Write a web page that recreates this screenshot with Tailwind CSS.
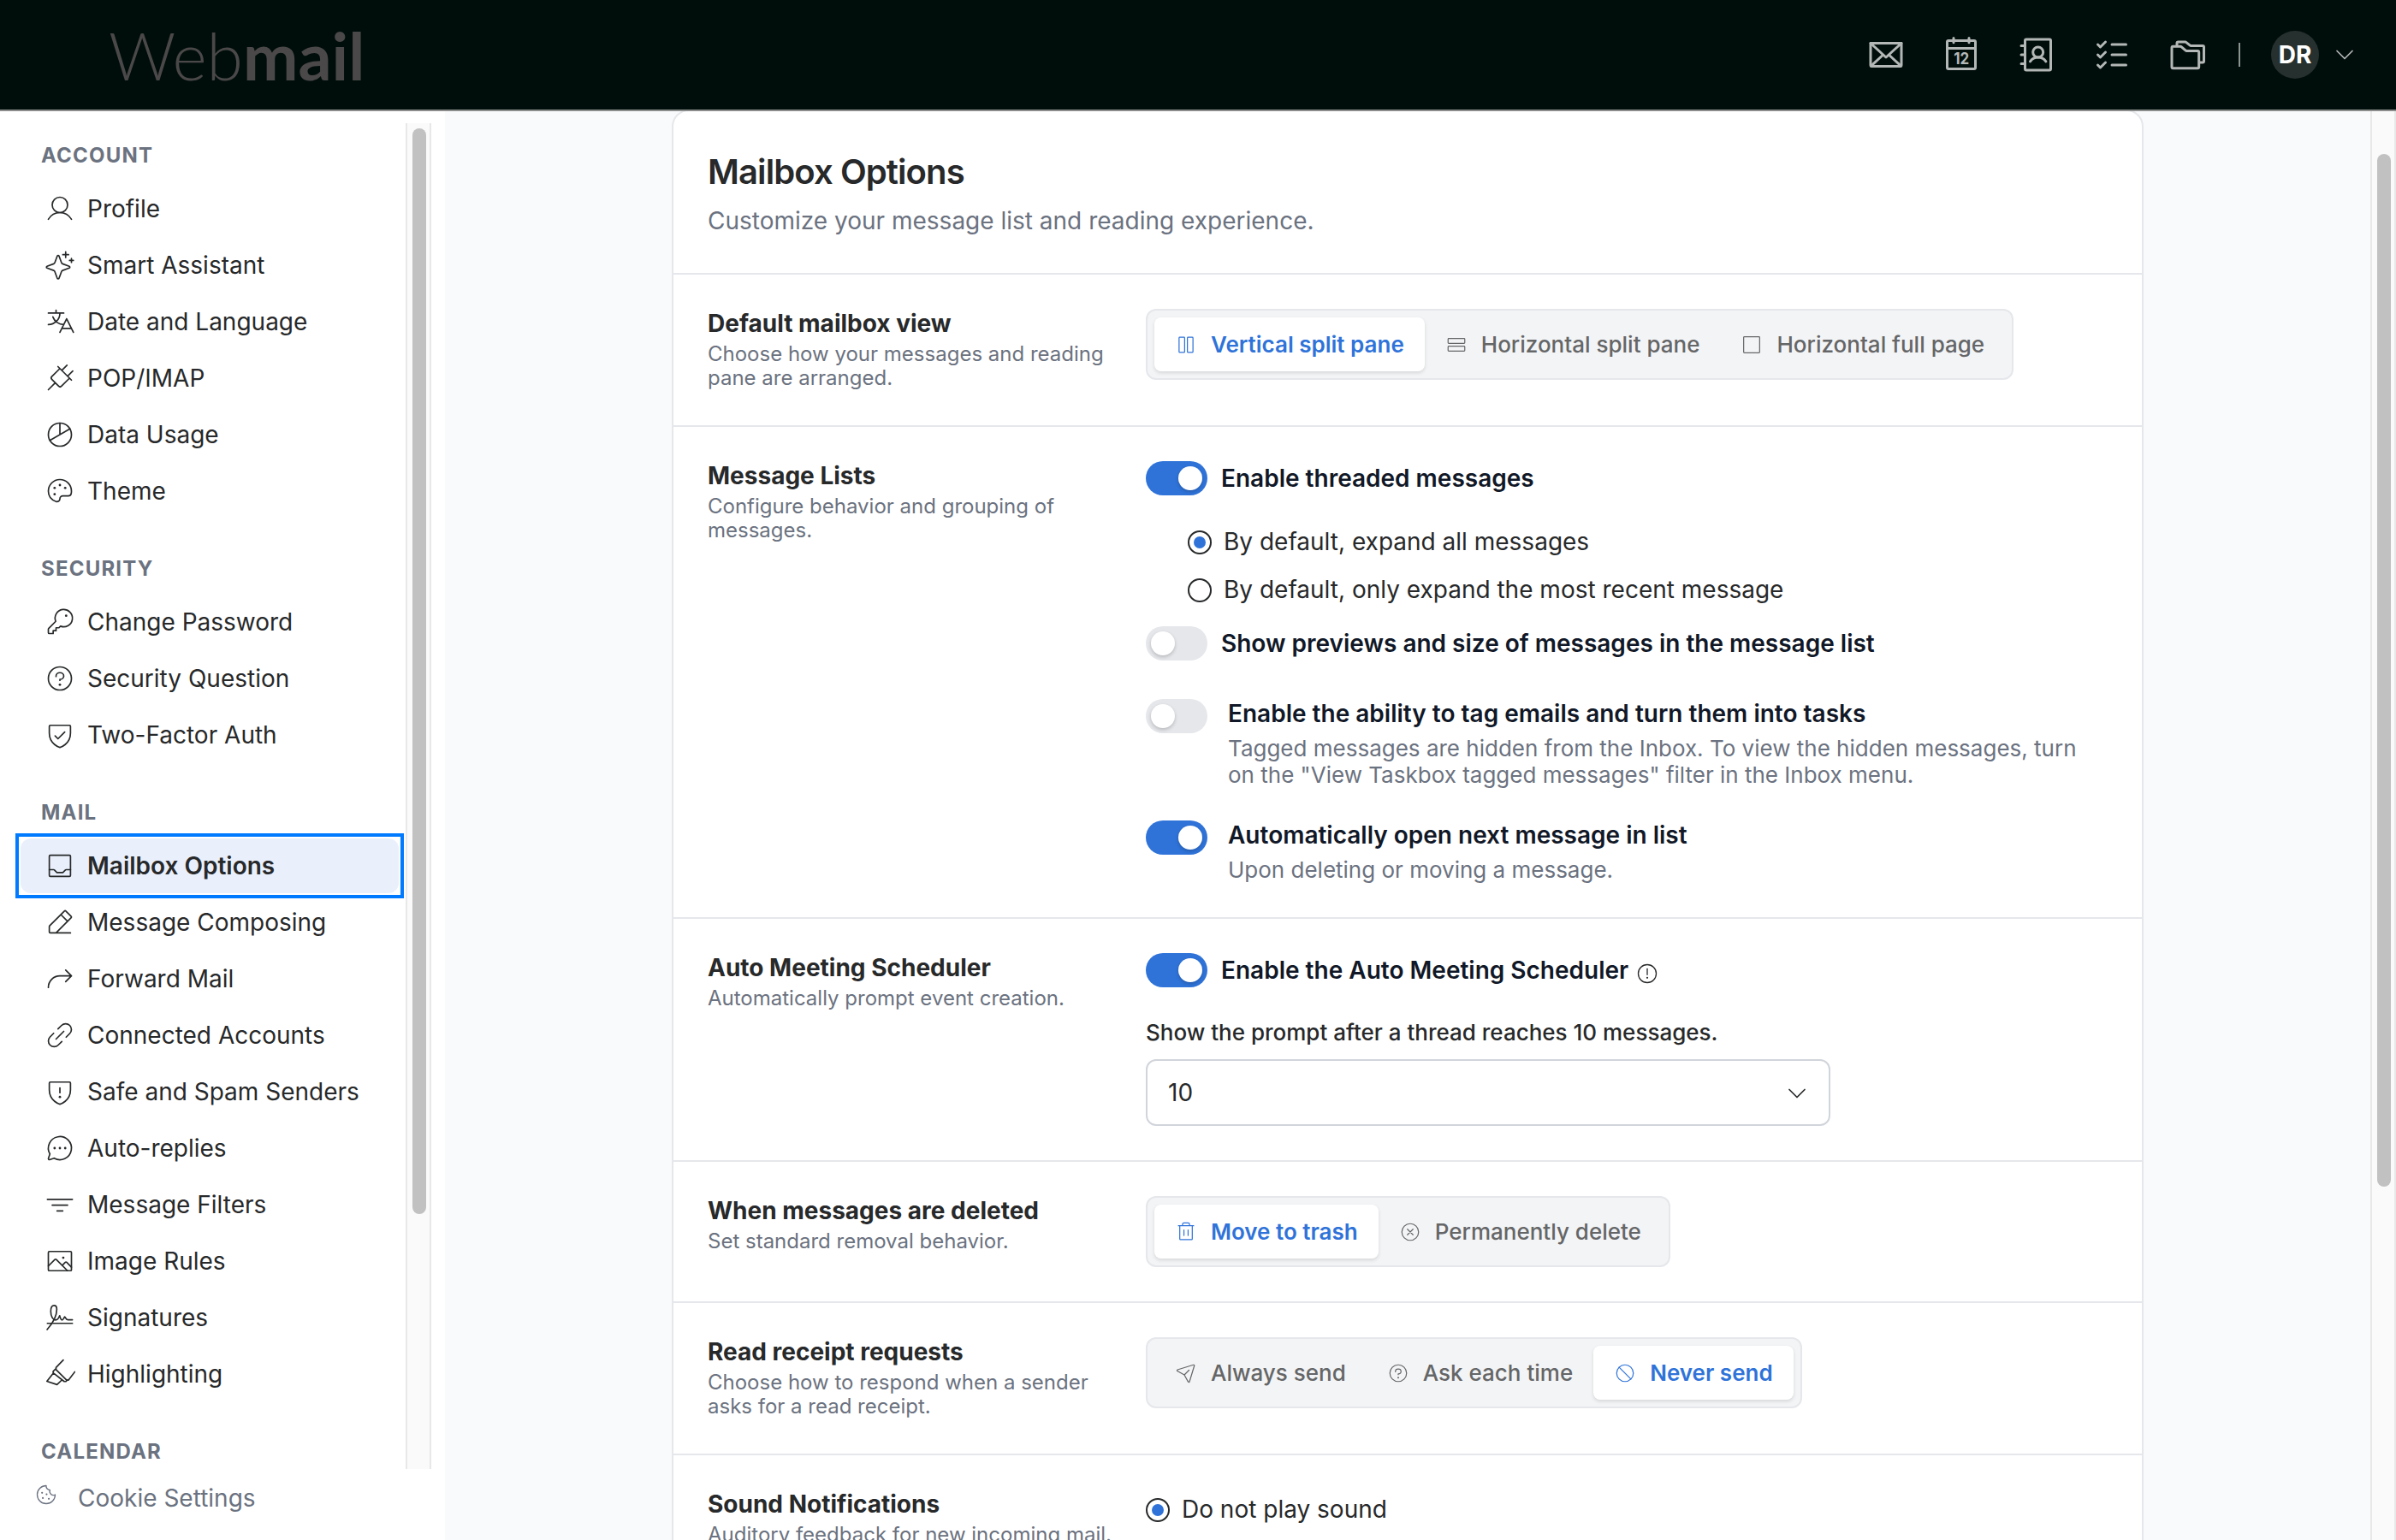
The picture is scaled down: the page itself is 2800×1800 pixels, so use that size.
<!DOCTYPE html>
<html lang="en" class="text-[32px]">
<head>
  <meta charset="UTF-8" />
  <title>Webmail - Mailbox Options</title>
  <script src="https://cdn.jsdelivr.net/npm/@tailwindcss/browser@4"></script>
</head>
<body class="h-[1800px] w-[2800px] flex flex-col overflow-hidden bg-[#f9fafc] font-['Inter',sans-serif] text-sm leading-[1.2] text-[#27292a] fill-none stroke-current [stroke-linecap:round] [stroke-linejoin:round] [stroke-width:12]">

  <!-- Header -->
  <header class="h-[130px] shrink-0 flex items-center justify-between border-b-2 border-[#8b8d8c] bg-[#000e0b] pl-[127px] pr-[50px] text-[#b3b7b6] [stroke-width:16]">
    <div class="font-['Lato',sans-serif] text-[77px] font-light text-[#4a4848]">Web<span class="font-bold">mail</span></div>
    <div class="flex items-center">
      <div class="flex gap-5 [&>svg]:size-6">
        <svg viewBox="0 0 256 256"><path d="M32,56H224V192a8,8,0,0,1-8,8H40a8,8,0,0,1-8-8Z"/><path d="M224,56l-96,88L32,56M110.5,128,34.5,197.7M221.5,197.7,145.5,128"/></svg>
        <svg viewBox="0 0 256 256"><rect x="40" y="40" width="176" height="176" rx="8"/><path d="M176,24V52M80,24V52M40,88H216"/><text x="81" y="186" textLength="96" lengthAdjust="spacingAndGlyphs" class="fill-current stroke-none text-[98px] font-bold">12</text></svg>
        <svg viewBox="0 0 256 256"><rect x="56" y="32" width="160" height="192" rx="8"/><path d="M32,72H56M32,128H56M32,184H56"/><circle cx="137" cy="112" r="32"/><path d="M88,170a60,60,0,0,1,98,0"/></svg>
        <svg viewBox="0 0 256 256"><path d="M128,64h88M128,128h88M128,192h88M40,64,56,80,88,48M40,128l16,16,32-32M40,192l16,16,32-32"/></svg>
        <svg viewBox="0 0 256 256"><path d="M32,204V84a8,8,0,0,1,8-8H86a8,8,0,0,1,5,2l28,24a8,8,0,0,0,5,2h69a8,8,0,0,1,8,8v92a8,8,0,0,1-8,8H40A8,8,0,0,1,32,204Z"/><path d="M64,72V56a8,8,0,0,1,8-8h44a8,8,0,0,1,5,2l25,20a8,8,0,0,0,5,2h73a8,8,0,0,1,8,8v88a8,8,0,0,1-8,8H204"/></svg>
      </div>
      <div class="ml-[36px] h-[28px] w-[2px] bg-[#8d9391]"></div>
      <div class="ml-[36px] flex size-7 items-center justify-center rounded-full bg-[#26302e] pt-[2px] font-bold text-white">DR</div>
      <svg viewBox="0 0 20 10" class="ml-[20px] h-[10px] w-[20px] overflow-visible [stroke-width:1.7]"><path d="M1,0.5l9,9,9-9"/></svg>
    </div>
  </header>

  <div class="flex min-h-0 flex-1">

    <!-- Sidebar -->
    <aside class="flex w-[520px] shrink-0 flex-col bg-white pt-[14px]">
      <div class="flex h-[1573px] shrink-0 overflow-hidden">
        <nav class="w-[474px] pl-[24px] pr-[8px] pt-[22px] [&_h2]:mb-[14px] [&_h2]:pl-[24px] [&_h2]:text-[24px] [&_h2]:leading-[32px] [&_h2]:font-bold [&_h2]:tracking-[0.05em] [&_h2]:text-[#6b7280] [&_ul]:mb-[43px] [&_ul]:flex [&_ul]:flex-col [&_ul]:gap-[2px] [&_a]:flex [&_a]:h-[64px] [&_a]:items-center [&_a]:gap-[14px] [&_a]:rounded-[12px] [&_a]:px-[28px] [&_a]:pt-[2px] [&_svg]:-mt-[2px] [&_svg]:size-[36px] [&_svg]:shrink-0">
          <h2>ACCOUNT</h2>
          <ul>
            <li><a><svg viewBox="0 0 256 256"><circle cx="128" cy="96" r="64"/><path d="M32,216c19.37-33.47,54.55-56,96-56s76.63,22.53,96,56"/></svg>Profile</a></li>
            <li><a><svg viewBox="0 0 256 256"><path d="M84.27,171.73l-55.09-20.3a7.92,7.92,0,0,1,0-14.86l55.09-20.3a16,16,0,0,0,9.46-9.46l20.3-55.09a7.92,7.92,0,0,1,14.86,0l20.3,55.09a16,16,0,0,0,9.46,9.46l55.09,20.3a7.92,7.92,0,0,1,0,14.86l-55.09,20.3a16,16,0,0,0-9.46,9.46l-20.3,55.09a7.92,7.92,0,0,1-14.86,0l-20.3-55.09A16,16,0,0,0,84.27,171.73Z" transform="translate(-8 0)"/><path d="M176,16V64M224,72v32M200,40H152M240,88H208"/></svg>Smart Assistant</a></li>
            <li><a><svg viewBox="0 0 256 256"><path d="M240,216,184,104,128,216M144,184h80M96,32V56M32,56H160M128,56a96,96,0,0,1-96,96M69.5,88A96,96,0,0,0,160,152"/></svg>Date and Language</a></li>
            <li><a><svg viewBox="0 0 256 256"><path d="M112,32,224,144M187,21,146,62M235,69l-41,41M88,168,32,224M128,48,60.7,115.3a16,16,0,0,0,0,22.6l57.4,57.4a16,16,0,0,0,22.6,0L208,128"/></svg>POP/IMAP</a></li>
            <li><a><svg viewBox="0 0 256 256"><circle cx="128" cy="128" r="96"/><path d="M128,128V32M44.86,176,211.14,80"/></svg>Data Usage</a></li>
            <li><a><svg viewBox="0 0 256 256"><path d="M221.6,149.4A24,24,0,0,1,198.2,168H152a24,24,0,0,0-24,24,24,24,0,0,1-32,22.61C58.73,201.44,32,169.81,32,128a96,96,0,0,1,95-96c53.11-.55,97,42.61,97,95.2A96,96,0,0,1,221.6,149.4Z"/><g class="fill-current stroke-none"><circle cx="128" cy="78" r="10"/><circle cx="84" cy="102" r="10"/><circle cx="84" cy="154" r="10"/><circle cx="172" cy="102" r="10"/></g></svg>Theme</a></li>
          </ul>

          <h2>SECURITY</h2>
          <ul>
            <li><a><svg viewBox="0 0 256 256"><path d="M93.17,122.83a72,72,0,1,1,40,40h0L120,176H96v24H72v24H40a8,8,0,0,1-8-8V187.3a8,8,0,0,1,2.3-5.6Z"/><circle cx="180" cy="76" r="10" class="fill-current stroke-none"/></svg>Change Password</a></li>
            <li><a><svg viewBox="0 0 256 256"><circle cx="128" cy="128" r="96"/><path d="M128,144v-8c17.67,0,32-12.54,32-28s-14.33-28-32-28S96,92.54,96,108v4"/><circle cx="128" cy="180" r="10" class="fill-current stroke-none"/></svg>Security Question</a></li>
            <li><a><svg viewBox="0 0 256 256"><path d="M216,112V56a8,8,0,0,0-8-8H48a8,8,0,0,0-8,8v56c0,96,88,120,88,120S216,208,216,112Z"/><path d="M88,136l24,24,56-56"/></svg>Two-Factor Auth</a></li>
          </ul>

          <h2>MAIL</h2>
          <ul>
            <li class="relative bg-white outline-4 outline-offset-2 outline-[#007aff]"><a class="bg-[#eaf0fb] font-semibold"><svg viewBox="0 0 256 256"><rect x="40" y="40" width="176" height="176" rx="8"/><path d="M40,160H76.69a8,8,0,0,1,5.65,2.34l19.32,19.32a8,8,0,0,0,5.65,2.34h41.38a8,8,0,0,0,5.65-2.34l19.32-19.32a8,8,0,0,1,5.65-2.34H216"/></svg>Mailbox Options</a></li>
            <li><a><svg viewBox="0 0 256 256"><path d="M96,216H48a8,8,0,0,1-8-8V163.31a8,8,0,0,1,2.34-5.65L165.66,34.34a8,8,0,0,1,11.31,0L221.66,79a8,8,0,0,1,0,11.31L96,216H216M136,64l56,56"/></svg>Message Composing</a></li>
            <li><a><svg viewBox="0 0 256 256"><path d="M176,56l48,48-48,48M32,200a96,96,0,0,1,96-96h96"/></svg>Forward Mail</a></li>
            <li><a><svg viewBox="0 0 256 256"><path d="M96,160l64-64M112,76.11l30.06-30a48,48,0,0,1,67.88,67.88L179.88,144M76.11,112l-30,30.06a48,48,0,0,0,67.88,67.88L144,179.88"/></svg>Connected Accounts</a></li>
            <li><a><svg viewBox="0 0 256 256"><path d="M216,112V56a8,8,0,0,0-8-8H48a8,8,0,0,0-8,8v56c0,96,88,120,88,120S216,208,216,112Z"/><path d="M128,96v40"/><circle cx="128" cy="172" r="10" class="fill-current stroke-none"/></svg>Safe and Spam Senders</a></li>
            <li><a><svg viewBox="0 0 256 256"><path d="M79.93,211.11a96,96,0,1,0-35-35h0L32.42,213.46a8,8,0,0,0,10.12,10.12l37.39-12.47Z"/><g class="fill-current stroke-none"><circle cx="128" cy="128" r="10"/><circle cx="84" cy="128" r="10"/><circle cx="172" cy="128" r="10"/></g></svg>Auto-replies</a></li>
            <li><a><svg viewBox="0 0 256 256"><path d="M64,132H192M24,84H232M104,180h48"/></svg>Message Filters</a></li>
            <li><a><svg viewBox="0 0 256 256"><rect x="32" y="48" width="192" height="160" rx="8"/><path d="M147.31,164,173,138.34a8,8,0,0,1,11.31,0L224,178.06M32,168.69l54.34-54.35a8,8,0,0,1,11.32,0L191.31,208"/><circle cx="156" cy="100" r="10" class="fill-current stroke-none"/></svg>Image Rules</a></li>
            <li><a><svg viewBox="0 0 256 256"><path d="M24,176H232M22,228C64,180,102,112,102,60c0-20-8-32-22-32S52,44,52,76c0,44,20,72,40,72,16,0,26-14,34-36,6,24,10,36,20,36s14-18,22-26c8,4,8,24,26,24h38"/></svg>Signatures</a></li>
            <li><a><svg viewBox="0 0 256 256"><path d="M156,12,96,74v18L184,178h16l52-68M92,86,72,106v12l92,72h14l14-14M72,122,20,188l84,28,42-40"/></svg>Highlighting</a></li>
          </ul>

          <h2>CALENDAR</h2>
        </nav>
        <!-- Sidebar scrollbar -->
        <div class="w-[30px] border-x-2 border-[#e8e8e8] bg-[#fafafa] pl-[6px] pt-[6px]">
          <div class="h-[1269px] w-[16px] rounded-full bg-[#c1c1c1]"></div>
        </div>
      </div>
      <div class="flex items-center pl-[40px] pt-[18px] text-[#6b7280]">
        <svg viewBox="0 0 256 256" class="-mt-[9px] size-[28px]"><path d="M224,128A96,96,0,1,1,128,32a40,40,0,0,0,40,46,40,40,0,0,0,56,50Z"/><g class="fill-current stroke-none"><circle cx="156" cy="172" r="10"/><circle cx="92" cy="164" r="10"/><circle cx="84" cy="108" r="10"/><circle cx="132" cy="124" r="10"/></g></svg>
        <span class="ml-[23px]">Cookie Settings</span>
      </div>
    </aside>

    <!-- Settings card -->
    <main class="flex flex-1 justify-center overflow-hidden">
      <div class="-mt-[2px] h-[1900px] w-[1720px] shrink-0 rounded-t-[20px] border-2 border-[#e5e7eb] bg-white [&>section]:grid [&>section]:grid-cols-[480px_1fr] [&>section]:gap-x-[32px] [&>section]:border-t-2 [&>section]:border-[#e5e7eb] [&>section]:p-[40px] [&_h3]:mb-[4px] [&_h3]:pt-px [&_h3]:font-bold [&_h3+p]:text-[24px] [&_h3+p]:text-[#6b7280]">
        <div class="h-[189px] px-[40px] pt-[45px]">
          <h1 class="text-[40px] font-semibold leading-[52px] tracking-[-0.9px]">Mailbox Options</h1>
          <p class="mt-[15px] text-[#6b7280]">Customize your message list and reading experience.</p>
        </div>

        <section class="h-[178px]">
          <div><h3>Default mailbox view</h3><p>Choose how your messages and reading pane are arranged.</p></div>
          <div>
            <div class="inline-flex h-[83px] rounded-[12px] border-2 border-[#e5e7eb] bg-[#f3f4f6] p-[8px] text-[26px] font-medium text-[#656667] [&>div]:flex [&>div]:items-center [&>div]:gap-[16px] [&>div]:px-[24px] [&_svg]:size-[26px]">
              <div class="rounded-[8px] bg-white font-semibold text-[#2f73d9] shadow-[0_2px_4px_rgba(0,0,0,0.12)]"><svg viewBox="0 0 256 256"><rect x="48" y="40" width="64" height="176" rx="8"/><rect x="144" y="40" width="64" height="176" rx="8"/></svg>Vertical split pane</div>
              <div><svg viewBox="0 0 256 256"><rect x="32" y="56" width="192" height="56" rx="8"/><rect x="32" y="144" width="192" height="56" rx="8"/></svg>Horizontal split pane</div>
              <div><svg viewBox="0 0 256 256"><rect x="36" y="36" width="184" height="184" rx="8"/></svg>Horizontal full page</div>
            </div>
          </div>
        </section>

        <section class="h-[575px]">
          <div><h3>Message Lists</h3><p>Configure behavior and grouping of messages.</p></div>
          <div class="[&_b]:block [&_b]:font-semibold [&_b]:text-[#111827]">
            <div class="flex h-[40px] items-center gap-[16px]">
              <div class="flex h-[40px] w-[72px] items-center justify-end rounded-full bg-[#2f73d9] p-[6px]"><div class="size-[28px] rounded-full bg-white shadow-[0_2px_4px_rgba(0,0,0,0.2)]"></div></div>
              <b class="pt-[2px]">Enable threaded messages</b>
            </div>
            <div class="mt-[41px] flex h-[28px] items-center gap-[14px] pl-[49px]">
              <div class="flex size-[28px] items-center justify-center rounded-full border-2 border-[#27292a]"><div class="size-[14px] rounded-full bg-[#2f73d9]"></div></div>
              By default, expand all messages
            </div>
            <div class="mt-[28px] flex h-[28px] items-center gap-[14px] pl-[49px]">
              <div class="size-[28px] rounded-full border-2 border-[#27292a]"></div>
              By default, only expand the most recent message
            </div>
            <div class="mt-[28px] flex h-[40px] items-center gap-[16px]">
              <div class="flex h-[40px] w-[72px] items-center rounded-full bg-[#e5e7eb] p-[6px]"><div class="size-[28px] rounded-full bg-white shadow-[0_2px_4px_rgba(0,0,0,0.2)]"></div></div>
              <b class="pt-[2px]">Show previews and size of messages in the message list</b>
            </div>
            <div class="mt-[45px] flex gap-[24px]">
              <div class="flex h-[40px] w-[72px] shrink-0 items-center rounded-full bg-[#e5e7eb] p-[6px]"><div class="size-[28px] rounded-full bg-white shadow-[0_2px_4px_rgba(0,0,0,0.2)]"></div></div>
              <div>
                <b class="pt-px">Enable the ability to tag emails and turn them into tasks</b>
                <p class="mt-[7px] text-[26px] text-[#6b7280]">Tagged messages are hidden from the Inbox. To view the hidden messages, turn<br>on the "View Taskbox tagged messages" filter in the Inbox menu.</p>
              </div>
            </div>
            <div class="mt-[38px] flex gap-[24px]">
              <div class="flex h-[40px] w-[72px] shrink-0 items-center justify-end rounded-full bg-[#2f73d9] p-[6px]"><div class="size-[28px] rounded-full bg-white shadow-[0_2px_4px_rgba(0,0,0,0.2)]"></div></div>
              <div>
                <b class="pt-px">Automatically open next message in list</b>
                <p class="mt-[7px] text-[26px] text-[#6b7280]">Upon deleting or moving a message.</p>
              </div>
            </div>
          </div>
        </section>

        <section class="h-[284px]">
          <div><h3>Auto Meeting Scheduler</h3><p>Automatically prompt event creation.</p></div>
          <div>
            <div class="flex h-[40px] items-center">
              <div class="flex h-[40px] w-[72px] items-center justify-end rounded-full bg-[#2f73d9] p-[6px]"><div class="size-[28px] rounded-full bg-white shadow-[0_2px_4px_rgba(0,0,0,0.2)]"></div></div>
              <b class="ml-[16px] pt-[2px] font-semibold text-[#111827]">Enable the Auto Meeting Scheduler</b>
              <svg viewBox="0 0 256 256" class="ml-[8px] mt-[8px] size-[28px]"><circle cx="128" cy="128" r="96"/><path d="M128,76v64"/><circle cx="128" cy="172" r="10" class="fill-current stroke-none"/></svg>
            </div>
            <p class="mt-[37px] text-[26px] font-medium">Show the prompt after a thread reaches 10 messages.</p>
            <div class="mt-[16px] flex h-[78px] w-[800px] items-center justify-between rounded-[12px] border-2 border-[#d1d5db] pl-[24px] pr-[27px] pt-[2px]">10
              <svg viewBox="0 0 20 10" class="h-[10px] w-[20px] overflow-visible [stroke-width:1.7]"><path d="M1,0.5l9,9,9-9"/></svg>
            </div>
          </div>
        </section>

        <section class="h-[165px]">
          <div><h3>When messages are deleted</h3><p>Set standard removal behavior.</p></div>
          <div>
            <div class="inline-flex h-[83px] rounded-[12px] border-2 border-[#e5e7eb] bg-[#f3f4f6] p-[8px] text-[26px] font-medium text-[#656667] [&>div]:flex [&>div]:items-center [&>div]:gap-[16px] [&>div]:px-[24px] [&_svg]:size-[26px]">
              <div class="rounded-[8px] bg-white font-semibold text-[#2f73d9] shadow-[0_2px_4px_rgba(0,0,0,0.12)]"><svg viewBox="0 0 256 256"><path d="M216,56H40M104,104v64M152,104v64M200,56V208a8,8,0,0,1-8,8H64a8,8,0,0,1-8-8V56M168,56V40a16,16,0,0,0-16-16H104A16,16,0,0,0,88,40V56"/></svg>Move to trash</div>
              <div><svg viewBox="0 0 256 256"><circle cx="128" cy="128" r="96"/><path d="M160,96,96,160M160,160,96,96"/></svg>Permanently delete</div>
            </div>
          </div>
        </section>

        <section class="h-[178px]">
          <div><h3>Read receipt requests</h3><p>Choose how to respond when a sender asks for a read receipt.</p></div>
          <div>
            <div class="inline-flex h-[83px] rounded-[12px] border-2 border-[#e5e7eb] bg-[#f3f4f6] p-[8px] text-[26px] font-medium text-[#656667] [&>div]:flex [&>div]:items-center [&>div]:gap-[16px] [&>div]:px-[24px] [&_svg]:size-[26px]">
              <div><svg viewBox="0 0 256 256"><path d="M108.4,147.6l54.3-54.3M223.7,42.2a8,8,0,0,0-9.9-9.9l-184,56a8,8,0,0,0-1.1,14.9l79.7,44.4,44.4,79.7a8,8,0,0,0,14.9-1.1Z"/></svg>Always send</div>
              <div><svg viewBox="0 0 256 256"><circle cx="128" cy="128" r="96"/><path d="M128,144v-8c17.67,0,32-12.54,32-28s-14.33-28-32-28S96,92.54,96,108v4"/><circle cx="128" cy="180" r="10" class="fill-current stroke-none"/></svg>Ask each time</div>
              <div class="rounded-[8px] bg-white font-semibold text-[#2f73d9] shadow-[0_2px_4px_rgba(0,0,0,0.12)]"><svg viewBox="0 0 256 256"><circle cx="128" cy="128" r="96"/><path d="M60,60,196,196"/></svg>Never send</div>
            </div>
          </div>
        </section>

        <section>
          <div><h3>Sound Notifications</h3><p>Auditory feedback for new incoming mail.</p></div>
          <div class="mt-[10px] flex h-[28px] items-center gap-[14px]">
            <div class="flex size-[28px] items-center justify-center rounded-full border-2 border-[#27292a]"><div class="size-[14px] rounded-full bg-[#2f73d9]"></div></div>
            Do not play sound
          </div>
        </section>
      </div>
    </main>

    <!-- Page scrollbar -->
    <div class="w-[30px] shrink-0 border-x-2 border-[#e8e8e8] bg-[#fafafa] pl-[6px] pt-[50px]">
      <div class="h-[1207px] w-[16px] rounded-full bg-[#c1c1c1]"></div>
    </div>
  </div>
</body>
</html>
